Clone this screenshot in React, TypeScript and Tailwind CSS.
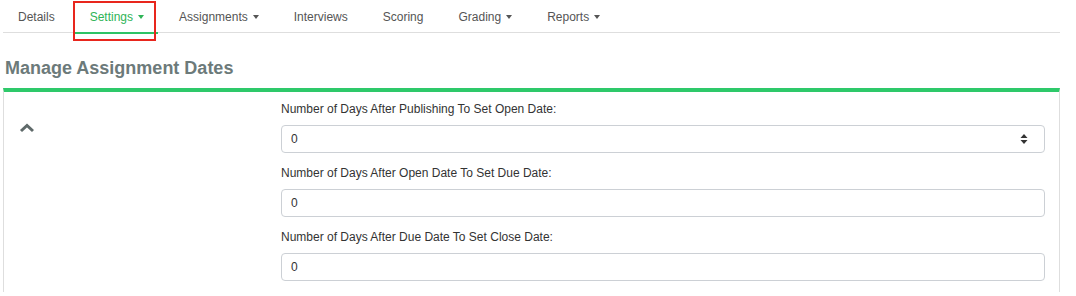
import { useState } from 'react'

const tabs = [
  { label: 'Details', caret: false },
  { label: 'Settings', caret: true },
  { label: 'Assignments', caret: true },
  { label: 'Interviews', caret: false },
  { label: 'Scoring', caret: false },
  { label: 'Grading', caret: true },
  { label: 'Reports', caret: true },
]

const fields = [
  { label: 'Number of Days After Publishing To Set Open Date:', spinner: true },
  { label: 'Number of Days After Open Date To Set Due Date:', spinner: false },
  { label: 'Number of Days After Due Date To Set Close Date:', spinner: false },
]

function Caret() {
  return (
    <span className="ml-[5px] inline-block h-0 w-0 border-x-[3.5px] border-t-[4px] border-x-transparent border-t-current align-middle" />
  )
}

export default function App() {
  const [active] = useState('Settings')

  return (
    <div className="h-[296px] w-[1076px] overflow-hidden bg-white pl-[3px] pr-[16px] font-['Liberation_Sans',Arial,sans-serif]">
      {/* tabs */}
      <div className="relative flex h-[33px] gap-[7px] border-b border-[#dedede] pl-[1px]">
        {tabs.map((t) => (
          <div
            key={t.label}
            className={`relative flex h-[33px] items-center px-[14px] pt-[1px] text-[12px] ${
              t.label === active ? 'text-[#2fb457]' : 'text-[#555]'
            }`}
          >
            {t.label}
            {t.caret && <Caret />}
            {t.label === active && (
              <div className="absolute bottom-[-1px] left-[-1px] right-0 h-[2px] bg-[#2ec365]" />
            )}
          </div>
        ))}
        {/* annotation box */}
        <div className="absolute left-[70px] top-[1px] h-[40px] w-[83px] border-2 border-[#e8261d]" />
      </div>

      <h2 className="mt-[24px] pl-[2px] text-[18px] font-bold leading-[22px] text-[#6c7a7a]">
        Manage Assignment Dates
      </h2>

      <div className="mt-[9px] border-x border-[#dedede] border-t-[4px] border-t-[#2ec96a] pt-[8px]">
        <div className="flex">
          <div className="w-[277px] shrink-0 pl-[15px] pt-[22px]">
            <svg width="16" height="12" viewBox="0 0 16 12">
              <path d="M2 9 L8 3.5 L14 9" fill="none" stroke="#5f6a6a" strokeWidth="3" />
            </svg>
          </div>
          <div className="mr-[14px] flex-1">
            {fields.map((f) => (
              <div key={f.label} className="mb-[11px]">
                <div className="h-[18px] text-[12px] leading-[18px] text-[#333]">{f.label}</div>
                <div className="mt-[7px] flex h-[28px] items-center rounded-[4px] border border-[#ccd0d5] pl-[9px] pr-[15px] text-[12px] text-[#333]">
                  <span className="flex-1">0</span>
                  {f.spinner && (
                    <svg width="10" height="12" viewBox="0 0 10 12">
                      <path d="M1.5 5 L5 1 L8.5 5 Z M1.5 7 L5 11 L8.5 7 Z" fill="#333" />
                    </svg>
                  )}
                </div>
              </div>
            ))}
          </div>
        </div>
      </div>
    </div>
  )
}
